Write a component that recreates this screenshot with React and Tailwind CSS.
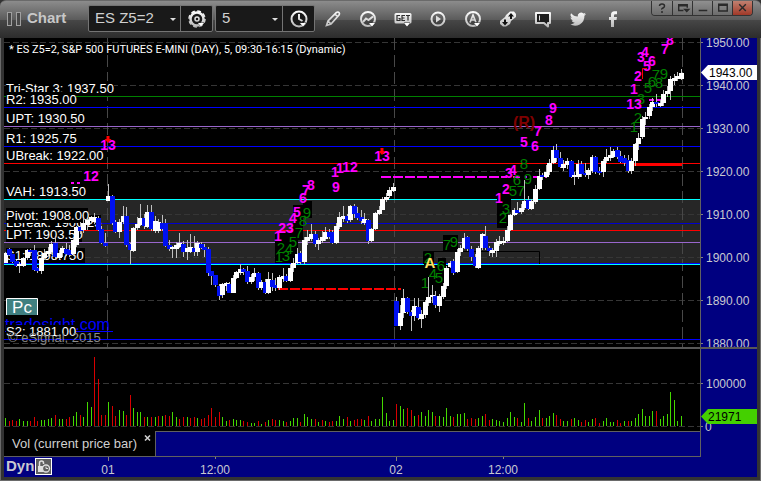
const BAR_START = 5.2
const BAR_STEP = 3.556

// [high, body top, body bottom, low, 1 = up / 0 = down], in chart units
const CANDLES = [
  [252, 253, 263, 263, 1], [248, 249, 255, 256, 0], [254, 254, 262, 263, 0], [260, 261, 266, 267, 0], [262, 264, 266, 273, 1],
  [257, 258, 266, 267, 1], [249, 250, 258, 260, 1], [249, 250, 252, 256, 0], [245, 250, 270, 271, 0], [267, 268, 271, 273, 0],
  [257, 258, 271, 274, 1], [249, 253, 258, 260, 1], [247, 251, 254, 256, 1], [241, 244, 252, 254, 1], [236, 243, 257, 259, 0],
  [250, 253, 258, 259, 1], [246, 248, 253, 257, 1], [243, 249, 254, 256, 0], [245, 250, 255, 257, 0], [238, 240, 254, 256, 1],
  [226, 227, 245, 247, 1], [222, 227, 231, 234, 0], [218, 223, 230, 233, 1], [219, 220, 225, 230, 1], [216, 217, 221, 224, 1],
  [213, 217, 222, 224, 1], [216, 218, 230, 231, 0], [226, 229, 243, 244, 0], [233, 243, 246, 247, 0],
  [184, 196, 201, 201, 1], [195, 196, 223, 225, 0], [220, 222, 232, 233, 0], [219, 222, 232, 238, 1], [206, 216, 222, 224, 1],
  [207, 216, 245, 247, 0], [243, 244, 250, 264, 0], [227, 228, 251, 252, 1], [217, 224, 228, 230, 1], [204, 218, 225, 226, 1],
  [214, 218, 226, 229, 0], [205, 212, 227, 228, 1], [205, 212, 229, 231, 0], [216, 221, 231, 233, 1], [219, 222, 231, 233, 1],
  [215, 223, 229, 231, 0], [219, 223, 246, 247, 0], [240, 245, 249, 251, 0], [246, 247, 249, 258, 1], [242, 245, 249, 258, 1],
  [233, 243, 247, 248, 1], [241, 244, 252, 257, 0], [240, 248, 252, 260, 1], [234, 247, 252, 253, 1], [236, 248, 252, 256, 0],
  [241, 243, 252, 256, 1], [242, 244, 248, 249, 0], [244, 247, 250, 257, 0], [247, 249, 273, 276, 0], [271, 271, 276, 285, 0],
  [275, 275, 285, 287, 0], [284, 286, 296, 300, 0], [283, 284, 295, 298, 1], [282, 283, 286, 291, 1], [282, 284, 293, 293, 0],
  [275, 278, 293, 293, 1], [271, 272, 278, 279, 1], [264, 269, 273, 275, 1], [268, 269, 272, 275, 0], [266, 271, 282, 284, 0],
  [274, 277, 282, 284, 1], [268, 273, 277, 281, 1], [272, 273, 288, 290, 0], [280, 282, 288, 290, 1], [279, 282, 293, 294, 0],
  [272, 279, 293, 294, 1], [273, 280, 287, 291, 0], [278, 285, 288, 291, 0], [275, 277, 288, 290, 1], [268, 276, 279, 282, 1],
  [274, 276, 281, 282, 0], [264, 268, 281, 282, 1], [258, 263, 268, 272, 1], [248, 254, 263, 264, 1], [251, 253, 262, 264, 0],
  [237, 240, 262, 264, 1], [230, 237, 241, 245, 1], [224, 234, 239, 241, 1], [231, 234, 244, 247, 0], [238, 240, 244, 250, 1],
  [231, 237, 241, 243, 1], [227, 232, 239, 241, 1], [229, 232, 237, 239, 0], [230, 232, 243, 244, 0], [223, 226, 243, 244, 1],
  [212, 217, 227, 229, 1], [206, 216, 219, 222, 1], [214, 216, 221, 223, 0], [205, 206, 220, 222, 1], [204, 206, 214, 218, 0],
  [207, 213, 218, 220, 0], [210, 217, 221, 224, 0], [213, 219, 223, 225, 1], [219, 220, 241, 244, 0], [228, 229, 241, 242, 1],
  [212, 213, 229, 230, 1], [206, 210, 214, 215, 1], [197, 199, 210, 210, 1], [193, 197, 200, 202, 1], [187, 190, 196, 198, 1],
  [183, 187, 191, 192, 1],
  [297, 301, 326, 326, 0], [305, 313, 326, 330, 1], [289, 298, 313, 318, 1], [297, 298, 312, 314, 0], [310, 312, 316, 331, 0],
  [298, 306, 316, 321, 1], [298, 307, 318, 320, 0], [310, 314, 319, 328, 1], [300, 302, 315, 318, 1], [277, 297, 303, 306, 1],
  [285, 295, 297, 303, 1], [291, 296, 305, 308, 0], [294, 296, 306, 312, 1], [283, 286, 297, 299, 1], [266, 268, 286, 289, 1],
  [261, 263, 267, 268, 1], [259, 261, 273, 275, 0], [249, 252, 272, 273, 1], [245, 248, 252, 256, 1], [233, 238, 248, 249, 1],
  [236, 237, 249, 251, 0], [246, 249, 257, 261, 0], [254, 257, 266, 268, 0], [246, 248, 268, 269, 1], [233, 234, 248, 250, 1],
  [226, 236, 248, 250, 0], [246, 248, 251, 256, 0], [248, 250, 253, 257, 1], [239, 242, 251, 257, 1], [236, 241, 244, 246, 1],
  [237, 241, 243, 245, 1], [226, 230, 241, 242, 1], [214, 215, 230, 231, 1], [208, 210, 215, 216, 1], [202, 210, 213, 214, 0],
  [204, 208, 212, 214, 1], [180, 201, 208, 210, 1], [196, 200, 209, 210, 0], [199, 201, 209, 210, 1], [185, 189, 202, 204, 1],
  [169, 176, 189, 190, 1], [173, 175, 177, 180, 0], [165, 172, 177, 178, 1], [159, 163, 172, 175, 1], [146, 150, 163, 164, 1],
  [144, 150, 158, 162, 0], [152, 158, 167, 168, 0], [160, 164, 168, 171, 1], [158, 161, 165, 169, 1], [160, 161, 177, 178, 0],
  [172, 175, 177, 185, 1], [160, 164, 177, 179, 1], [161, 164, 174, 177, 0], [163, 173, 175, 177, 0], [168, 170, 175, 179, 1],
  [155, 157, 171, 173, 1], [156, 157, 172, 174, 0], [167, 171, 173, 175, 0], [159, 161, 172, 177, 1], [149, 157, 161, 163, 1],
  [147, 155, 158, 161, 1], [149, 151, 157, 158, 1], [147, 150, 157, 159, 0], [151, 156, 162, 163, 0], [155, 158, 163, 166, 0],
  [155, 160, 171, 173, 0], [158, 161, 171, 174, 1], [143, 144, 161, 166, 1], [133, 138, 144, 150, 1], [116, 119, 137, 139, 1],
  [112, 117, 119, 125, 1], [104, 107, 116, 119, 1], [98, 102, 107, 111, 1], [94, 102, 104, 107, 0], [100, 103, 106, 107, 1],
  [90, 94, 103, 106, 1], [86, 91, 94, 97, 1], [76, 79, 91, 100, 1], [74, 78, 81, 85, 1], [72, 76, 79, 81, 1],
  [69, 73, 79, 80, 1],
]

// bar heights, negative = down bar
const VOLUME = [
  8, -5, -6, -5, 7, 5, 5, -5, -9, -5, 6, 6, 7, 8, -11, 7, 7, -7, -9, 10, 14, -11, 9, 24, 19, -69, -47, -11, -11,
  24, -20, -10, 16, 15, -11, -31, 18, 14, 14, -9, 9, -9, 9, -10, 10, -11, -10, 14, 9, -7, -9, 9, -8, -9, 8, -7,
  -8, -11, -18, -9, -14, 9, 5, -6, 7, 6, 6, -5, -4, 3, 3, -5, 2, -4, 6, -7, -6, 6, 5, -4, 5, 8, 8, -4, 12, 9, 7,
  -7, 4, -6, 5, -4, -5, 5, 10, 7, -9, 5, -6, -7, -7, 6, -10, 5, 7, 7, 29, 13, 5, 6,
  -22, 20, 17, -18, -16, 10, -11, 14, 10, 16, 14, -10, 10, 9, 18, 10, -9, 12, 12, 13, -7, -8, -7, 8, 10, -12, -6,
  7, 6, 5, 4, 8, 14, 9, -8, 4, 23, -8, 5, 9, 16, -8, 8, 10, 13, -11, -7, 5, 5, -7, 8, 6, -4, -6, 4, 7, -8, -3, 5,
  8, 4, 4, -6, -3, 5, -5, 5, 8, 12, 17, 10, 10, 15, -15, 7, 10, 12, 34, 26, 5, 10,
]

const PRICES = ['1950.00', '1940.00', '1930.00', '1920.00', '1910.00', '1900.00', '1890.00', '1880.00']

const LEVEL_LINES = [
  { y: 96, color: '#008000' },
  { y: 107, color: '#0000ff' },
  { y: 126, color: '#9966cc' },
  { y: 146, color: '#0000ff' },
  { y: 163, color: '#ff0000' },
  { y: 199, color: '#00ffff' },
  { y: 223, color: '#0000d0' },
  { y: 230, color: '#ff0000' },
  { y: 242, color: '#9966cc' },
  { y: 263, color: '#0000ff' },
  { y: 264, color: '#00ffff' },
  { y: 339, color: '#0000ff' },
]

// drawn in order, later labels cover earlier ones
const LEVEL_LABELS = [
  { text: 'Tri-Star 3: 1937.50', y: 93, w: 108 },
  { text: 'R2: 1935.00', y: 104, w: 70 },
  { text: 'UPT: 1930.50', y: 123, w: 78 },
  { text: 'R1: 1925.75', y: 143, w: 70 },
  { text: 'UBreak: 1922.00', y: 160, w: 97 },
  { text: 'VAH: 1913.50', y: 196, w: 81 },
  { text: 'LBreak: 1906.25', y: 227, w: 95 },
  { text: 'Pivot: 1908.00', y: 220, w: 82 },
  { text: 'LPT: 1903.50', y: 239, w: 76 },
  { text: 'VAL: 1898.50', y: 260, w: 79 },
  { text: 'S1: 1898.75', y: 260, w: 70 },
]

const SHADOWS = [
  [275, 232, 23, 31], [293, 205, 10, 35], [303, 201, 9, 17], [443, 235, 15, 17], [424, 252, 10, 15],
  [438, 258, 8, 14], [497, 211, 11, 17], [497, 199, 14, 13],
]

// [text, centre x, baseline]
const COUNTS_UP = [
  ['1', 278, 241], ['23', 286, 233], ['4', 293, 223], ['5', 297, 217], ['6', 303, 203], ['7', 306, 195], ['8', 311, 190],
  ['9', 336, 192], ['1', 335, 177], ['1', 340, 173], ['12', 350, 172], ['12', 91, 181], ['13', 108, 150], ['13', 382, 161],
  ['1', 499, 203], ['2', 506, 194], ['3', 509, 178], ['4', 513, 175], ['5', 524, 147], ['6', 535, 151], ['7', 538, 136],
  ['8', 549, 125], ['9', 553, 113], ['13', 634, 109], ['1', 634, 94], ['2', 638, 81], ['3', 641, 62], ['4', 645, 57],
  ['5', 647, 71], ['6', 652, 66], ['7', 665, 54], ['8', 670, 45],
]

const COUNTS_DOWN = [
  ['1', 279, 262], ['3', 286, 261], ['2', 281, 253], ['4', 289, 254], ['5', 293, 247], ['7', 299, 238], ['8', 303, 226],
  ['9', 307, 218], ['1', 425, 288], ['2', 428, 263], ['4', 433, 279], ['5', 439, 283], ['6', 441, 271], ['7', 447, 250],
  ['9', 454, 247], ['2', 503, 223], ['3', 506, 214], ['5', 513, 196], ['6', 517, 185], ['7', 521, 196], ['9', 528, 184],
  ['8', 524, 169], ['1', 634, 132], ['2', 638, 123], ['3', 641, 104], ['5', 648, 93], ['6', 652, 87], ['7', 656, 80],
  ['8', 659, 88], ['9', 664, 79],
]

const barX = (i) => Math.round(BAR_START + BAR_STEP * i)

function PriceChart() {
  return (
    <svg viewBox="4 38 753 309" className="block w-full h-auto bg-black" role="img" aria-label="ES Z5=2 price chart" fontFamily="'Liberation Sans', Arial, sans-serif">
      {/* value area */}
      <rect x="4" y="200" width="696" height="64" fill="#262626" />

      {/* grid */}
      <g stroke="#363636" strokeDasharray="6 3">
        {PRICES.map((p, i) => (
          <line key={p} x1="4" x2="700" y1={42.5 + i * 43} y2={42.5 + i * 43} />
        ))}
      </g>
      <g stroke="#484848" strokeDasharray="12 5">
        <line x1="107.5" x2="107.5" y1="38" y2="347" />
        <line x1="394.5" x2="394.5" y1="38" y2="347" />
        <line x1="682.5" x2="682.5" y1="38" y2="347" />
      </g>

      {LEVEL_LINES.map((l) => (
        <rect key={l.y} x="4" y={l.y} width="696" height="1" fill={l.color} />
      ))}
      <path d="M381 177H505" stroke="#ff00ff" strokeWidth="2" strokeDasharray="10 2" />
      <path d="M505 177H548" stroke="#ff00ff" strokeWidth="2" strokeDasharray="2 6 7 5" />
      <path d="M649 100H664" stroke="#ff00ff" strokeWidth="2" strokeDasharray="5 2" />
      <path d="M278 289H401" stroke="#ff0000" strokeWidth="2" strokeDasharray="10 2" />
      <rect x="634" y="163" width="48" height="3" fill="#ff0000" />

      <text x="9" y="53" fontSize="11" fontFamily="Roboto, 'Liberation Sans', sans-serif" fill="#fff">
        * ES Z5=2, S&amp;P 500 FUTURES E-MINI (DAY), 5, 09:30-16:15 (Dynamic)
      </text>

      {/* level labels */}
      {LEVEL_LABELS.map((l) => (
        <g key={l.text}>
          <rect x="6" y={l.y - 12} width={l.w} height="15" fill="#000" />
          <text x="6" y={l.y} fontSize="13" fill="#fff">{l.text}</text>
        </g>
      ))}
      <text x="5" y="330" fontSize="16" fill="#0000ff">tradesight.com</text>
      <rect x="5" y="331" width="108" height="1" fill="#0000ff" />
      <rect x="6" y="325" width="70" height="14" fill="#000" />
      <text x="6" y="336" fontSize="13" fill="#fff">S2: 1881.00</text>
      <text x="8" y="342" fontSize="13" fill="#8a8a8a">© eSignal, 2015</text>
      <path d="M6.5 315V298.5H37.500V315" fill="#408080" stroke="#fff" />
      <text x="22" y="313" fontSize="17" fill="#fff" textAnchor="middle">Pc</text>

      {/* counts */}
      {SHADOWS.map(([x, y, w, h]) => (
        <rect key={`${x}-${y}`} x={x} y={y} width={w} height={h} fill="#000" />
      ))}
      <path d="M423.500 264V251.500H539.500V264" fill="none" stroke="#000" />
      <g fontSize="15" fill="#008000" textAnchor="middle">
        {COUNTS_DOWN.map(([t, x, y]) => (
          <text key={`${x}-${y}`} x={x} y={y}>{t}</text>
        ))}
      </g>
      <g fontSize="14" fontWeight="bold" fill="#ff00ff" textAnchor="middle">
        {COUNTS_UP.map(([t, x, y]) => (
          <text key={`${x}-${y}`} x={x} y={y}>{t}</text>
        ))}
      </g>
      <path d="M71 183h3M77 183h3" stroke="#ff00ff" strokeWidth="2" />
      <path d="M106.500 136h3v3h2l-3.500 4-3.500-4h2zM380.500 148h3v3h2l-3.500 4-3.500-4h2z" fill="#ff0000" />
      <path d="M642.500 79V68.500H647" stroke="#ff0000" fill="none" />
      <text x="524" y="128" fontSize="16" fontWeight="bold" fill="#800000" textAnchor="middle">(R)</text>
      <text x="430" y="268" fontSize="15" fontWeight="bold" fill="#ffe066" textAnchor="middle">A</text>

      {/* candles */}
      {CANDLES.map(([high, top, bottom, low, up], i) => (
        <g key={i}>
          <rect x={barX(i)} y={high} width="1" height={low - high} fill="#c0c0c0" />
          <rect x={barX(i) - 2} y={top} width="5" height={bottom - top} fill={up ? '#ffffff' : '#0010f0'} />
        </g>
      ))}

      {/* price scale */}
      <rect x="700" y="38" width="57" height="309" fill="#000080" />
      <rect x="700" y="38" width="1" height="309" fill="#606060" />
      {PRICES.map((p, i) => (
        <g key={p}>
          <rect x="701" y={42 + i * 43} width="2" height="1" fill="#808080" />
          <text x="706" y={47 + i * 43} fontSize="12" fill="#c8c8d0">{p}</text>
        </g>
      ))}
      <path d="M701 72.500L708 65H757V80H708Z" fill="#fff" />
      <text x="709" y="77" fontSize="12" fill="#000">1943.00</text>
    </svg>
  )
}

function VolumeChart() {
  return (
    <svg viewBox="4 349 753 82" className="block w-full h-auto bg-black" role="img" aria-label="Volume chart" fontFamily="'Liberation Sans', Arial, sans-serif">
      <g stroke="#363636" strokeDasharray="6 3">
        <line x1="4" x2="700" y1="383.500" y2="383.500" />
        <line x1="4" x2="700" y1="426.500" y2="426.500" />
      </g>
      {VOLUME.map((v, i) => (
        <rect key={i} x={barX(i)} y={426 - Math.abs(v)} width="1" height={Math.abs(v)} fill={v > 0 ? '#44d800' : '#d80000'} />
      ))}
      <rect x="700" y="349" width="57" height="82" fill="#000080" />
      <rect x="700" y="349" width="1" height="82" fill="#606060" />
      <rect x="701" y="383" width="2" height="1" fill="#808080" />
      <rect x="701" y="426" width="2" height="1" fill="#808080" />
      <text x="706" y="388" fontSize="12" fill="#c8c8d0">100000</text>
      <text x="705" y="431" fontSize="12" fill="#c8c8d0">0</text>
      <path d="M701 416.500L708 409H757V424H708Z" fill="#44d000" />
      <text x="708" y="421" fontSize="12" fill="#000">21971</text>
    </svg>
  )
}

function TimeScale() {
  const ticks = [
    { label: '01', x: 108, h: 4 },
    { label: '12:00', x: 215, h: 2 },
    { label: '02', x: 396, h: 4 },
    { label: '12:00', x: 503, h: 2 },
  ]
  return (
    <svg viewBox="58 457 699 20" className="block flex-1 min-w-0" role="img" aria-label="Time scale" fontFamily="'Liberation Sans', Arial, sans-serif">
      {ticks.map((t) => (
        <g key={t.x}>
          <rect x={t.x} y="457" width="1" height={t.h} fill="#808080" />
          <text x={t.x} y="474" fontSize="12" fill="#c8c8d0" textAnchor="middle">{t.label}</text>
        </g>
      ))}
    </svg>
  )
}

function Icon({ children, menu }) {
  return (
    <svg viewBox="0 0 20 20" className="w-5 h-5" fill="none" stroke="url(#metal)" strokeWidth="2" aria-hidden="true">
      {children}
      {menu && <path d="M11 14h6l-3 3.500z" fill="#fff" stroke="#333" strokeWidth="1" paintOrder="stroke" />}
    </svg>
  )
}

const TOOLS = [
  {
    label: 'Draw',
    icon: (
      <Icon>
        <path d="M3.500 16.500L5 12l8.500-8.500q1.500-1 2.500 0t0 2.500L8 15zM5 12l3 3M12 5l3 3" strokeWidth="1.700" />
      </Icon>
    ),
  },
  {
    label: 'Studies',
    icon: (
      <Icon menu>
        <circle cx="10" cy="10" r="7" />
        <path d="M5 13l3-3.500 2.500 1.500L15 7.500" />
      </Icon>
    ),
  },
  {
    label: 'Get',
    icon: (
      <Icon menu>
        <rect x="1.500" y="4" width="17" height="10.500" rx="1.500" fill="url(#metal)" stroke="none" />
        <path d="M7 6.500H4v5h3V9.500H5.500M12 6.500H9v5h3M9 9h2.500M13 6.500h4M15 6.500v5" stroke="#2d2d2d" strokeWidth="1.200" />
      </Icon>
    ),
  },
  {
    label: 'Play',
    icon: (
      <Icon>
        <circle cx="10" cy="10" r="6.500" />
        <path d="M8 6.500v7l5-3.500z" fill="#ddd" stroke="none" />
      </Icon>
    ),
  },
  {
    label: 'Auto',
    icon: (
      <Icon menu>
        <circle cx="10" cy="10" r="7" />
        <path d="M7 13.500L10 6l3 7.500M8 11h4" strokeWidth="1.700" />
      </Icon>
    ),
  },
  {
    label: 'Link',
    icon: (
      <Icon>
        <path d="M2 12l5-4 1-2 4-3.500h4L18 5v3l-5 4-1 3-4 2.500H5L2 15z" fill="url(#metal)" stroke="none" />
        <path d="M13 4l3 3.500h-2v2.500h-2V7.500h-2zM7 16.500L4 13h2v-2.500h2V13h2z" fill="#111" stroke="none" />
      </Icon>
    ),
  },
  {
    label: 'Comment',
    icon: (
      <Icon>
        <path d="M3 4h14v10h-2v3.500L11 14H3z" fill="#1c1c1c" strokeLinejoin="round" />
        <path d="M6.500 6.500v5" stroke="#ddd" strokeWidth="1" />
      </Icon>
    ),
  },
  {
    label: 'Twitter',
    icon: (
      <Icon>
        <path
          d="M18 5c-.6.3-1.200.5-1.900.6.7-.4 1.200-1.100 1.400-1.800-.6.4-1.400.7-2.100.8a3.300 3.300 0 0 0-5.600 3C7.100 7.500 4.700 6.200 3.100 4.200a3.300 3.300 0 0 0 1 4.400c-.5 0-1-.2-1.500-.4 0 1.600 1.100 2.900 2.600 3.200-.5.1-1 .1-1.500 0 .4 1.300 1.600 2.200 3.100 2.300A6.600 6.600 0 0 1 2 15.100 9.300 9.300 0 0 0 16.400 6.800C17 6.300 17.600 5.700 18 5z"
          fill="url(#metal)"
          stroke="none"
        />
      </Icon>
    ),
  },
  {
    label: 'Facebook',
    icon: (
      <Icon>
        <path d="M8 18v-7H6V8h2V6c0-2.500 1.200-3.700 3.500-3.700H14v3h-1.500C11.500 5.300 11 5.600 11 6.500V8h3l-.5 3H11v7z" fill="url(#metal)" stroke="none" />
      </Icon>
    ),
  },
]

const WINDOW_BUTTONS = [
  { label: 'Help', path: 'M7.500 5q0-2 2.500-2t2.500 2q0 1.200-1.500 2T10 8.500M10 10v2' },
  { label: 'Window menu', path: 'M11 10H6V4h9v3M6 5h9M12.500 9h4l-2 2z' },
  { label: 'Minimize', path: 'M6 10h9' },
  { label: 'Maximize', path: 'M6 10.500V3.500h9v7zM6 4.500h9' },
  { label: 'Close', path: 'M6.500 3.500l7 7M13.500 3.500l-7 7', close: true },
]

function Combo({ label, value, options, button, icon, className }) {
  return (
    <div className={`flex h-[27px] rounded-xs border border-[#747474] bg-[#191919] ${className}`}>
      <div className="relative flex-1">
        <select
          aria-label={label}
          defaultValue={value}
          className="h-full w-full appearance-none bg-transparent pl-1.5 text-[15px] text-[#d0d0d0] outline-none"
        >
          {options.map((o) => (
            <option key={o}>{o}</option>
          ))}
        </select>
        <svg viewBox="0 0 6 3" className="pointer-events-none absolute right-1 top-3 h-[3px] w-1.5" aria-hidden="true">
          <path d="M0 0h6L3 3z" fill="#ddd" />
        </svg>
      </div>
      <button type="button" aria-label={button} className="flex w-8 items-center justify-center border-l border-[#747474]">
        {icon}
      </button>
    </div>
  )
}

function Toolbar() {
  return (
    <header className="flex h-[38px] items-center rounded-t-md border-t border-[#6a6a6a] bg-[linear-gradient(#8c8c8c,#5c5c5c_50%,#474747_51%,#2c2c2c)] pl-[7px] pr-2 pb-0.5">
      <svg className="h-0 w-0" aria-hidden="true">
        <defs>
          <linearGradient id="metal" gradientUnits="userSpaceOnUse" x1="0" y1="2" x2="0" y2="18">
            <stop offset="0" stopColor="#ffffff" />
            <stop offset="1" stopColor="#b8b8b8" />
          </linearGradient>
        </defs>
      </svg>
      <div className="flex gap-1">
        <span className="h-3.5 w-[5px] border border-[#a0a0a0] bg-[#484848]" />
        <span className="h-3.5 w-[5px] border border-[#a0a0a0] bg-[#484848]" />
      </div>
      <h1 className="ml-1.5 w-[61px] text-[15px] font-bold text-[#c8c8c8]">Chart</h1>

      <Combo
        label="Symbol"
        value="ES Z5=2"
        options={['ES Z5=2', 'NQ Z5=2']}
        button="Chart settings"
        className="w-[125px]"
        icon={
          <Icon menu>
            <circle cx="10" cy="10" r="6.500" strokeWidth="2.500" />
            <circle cx="10" cy="10" r="8" strokeWidth="1.500" strokeDasharray="3.800 2.480" />
            <circle cx="10" cy="10" r="2" strokeWidth="1.500" />
          </Icon>
        }
      />
      <Combo
        label="Interval"
        value="5"
        options={['1', '5', '15', '60', 'D']}
        button="Time template"
        className="ml-0.5 w-[100px]"
        icon={
          <Icon menu>
            <circle cx="10" cy="10" r="7.500" />
            <path d="M10 5v5l3.500 2" />
          </Icon>
        }
      />

      <nav aria-label="Chart tools" className="flex">
        {TOOLS.map((t) => (
          <button key={t.label} type="button" aria-label={t.label} className="flex h-7 w-[35px] items-center justify-center">
            {t.icon}
          </button>
        ))}
      </nav>

      <div className="ml-auto flex self-start overflow-hidden rounded-b-sm border-x border-b border-[#333]">
        {WINDOW_BUTTONS.map((b) => (
          <button
            key={b.label}
            type="button"
            aria-label={b.label}
            className={`h-3.5 w-5 border-[#333] not-first:border-l ${b.close ? 'bg-linear-to-b from-[#c08070] to-[#a03828]' : 'bg-linear-to-b from-[#909090] to-[#6c6c6c]'}`}
          >
            <svg viewBox="0 0 20 14" className="block w-full" fill="none" stroke="#2a2a2a" strokeWidth="1.500" aria-hidden="true">
              <path d={b.path} />
            </svg>
          </button>
        ))}
      </div>
    </header>
  )
}

export default function App() {
  return (
    <div className="bg-[#333] font-['Liberation_Sans',Arial,sans-serif]">
      <Toolbar />
      <main className="border-x border-b border-[#6a6a6a] px-[3px] pb-[3px]">
        <PriceChart />
        <div className="h-0.5 bg-[#585858]" />
        <VolumeChart />

        <div className="flex bg-[#000080]">
          <div className="flex w-[152px] items-start border-r border-b border-[#606060] bg-black pl-2">
            <span className="pt-[3px] text-[13px] leading-5 text-[#d0d0d0]">Vol (current price bar)</span>
            <button type="button" aria-label="Close volume study" className="ml-auto mr-1 mt-1">
              <svg viewBox="0 0 7 6" className="block h-1.5 w-[7px]" stroke="#d0d0d0" strokeWidth="1.500" aria-hidden="true">
                <path d="M1 0.500l5 5M6 0.500l-5 5" />
              </svg>
            </button>
          </div>
          <div className="h-[26px] flex-1 border-y border-[#606060]" />
          <div className="w-[57px] border-l border-[#606060]" />
        </div>

        <div className="flex h-5 items-center bg-[#000080]">
          <div className="flex w-[54px] items-start justify-between self-start pt-px pl-0.5 pr-1.5">
            <span className="text-[15px] leading-4 font-bold text-[#c8c8d0]">Dyn</span>
            <button type="button" aria-label="Lock time range" className="border border-white bg-[#606060]">
              <svg viewBox="0 0 15 15" className="block h-[15px] w-[15px]" fill="none" stroke="#e0e0e0" aria-hidden="true">
                <path d="M3.500 7V4q0-2 2-2t2 2v1" strokeWidth="1.500" />
                <rect x="2" y="7" width="6" height="6" fill="#e0e0e0" stroke="none" />
                <circle cx="10" cy="9.500" r="3.500" fill="#606060" strokeWidth="1.300" />
                <path d="M10 7.500v2h2" />
              </svg>
            </button>
          </div>
          <TimeScale />
        </div>
      </main>
    </div>
  )
}
